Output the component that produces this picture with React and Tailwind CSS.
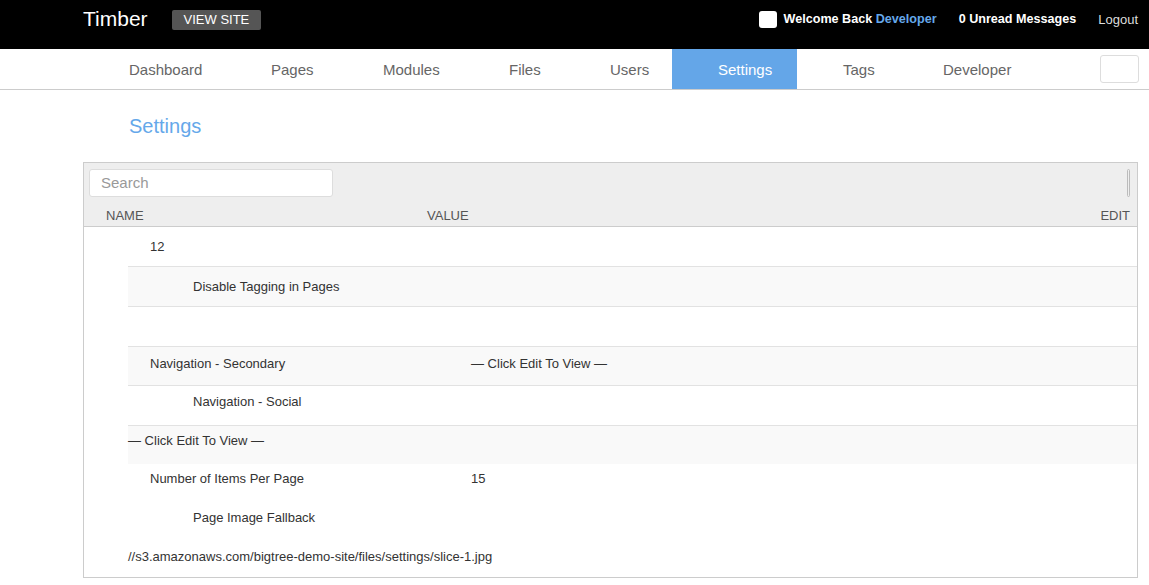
import React from "react";

const navItems = [
  ["Dashboard", "w-[142px]"],
  ["Pages", "w-[112px]"],
  ["Modules", "w-[126px]"],
  ["Files", "w-[101px]"],
  ["Users", "w-[108px]"],
  ["Settings", "w-[125px]"],
  ["Tags", "w-[100px]"],
  ["Developer", "w-[138px]"],
];

const Row = ({ shade, border = true, h, pt, children }) => (
  <div
    className={`flex items-start leading-[15px] ${h} ${pt} ${border ? "border-t border-[#e2e2e2]" : ""} ${
      shade ? "bg-[#f9f9f9]" : "bg-white"
    }`}
  >
    {children}
  </div>
);

const App = () => {
  return (
    <div className="min-h-screen bg-white text-[13px] text-[#333]" style={{ fontFamily: '"Liberation Sans", Arial, sans-serif' }}>
      {/* top bar */}
      <header className="h-[49px] bg-black flex items-center pl-[83px] pr-[11px]">
        <span className="text-white text-[21px] leading-none -mt-[12px]">Timber</span>
        <span className="ml-[24px] -mt-[10px] bg-[#555] text-white text-[13px] px-[12px] h-[20px] flex items-center rounded-[2px]">
          VIEW SITE
        </span>
        <div className="ml-auto flex items-center -mt-[11px]">
          <span className="w-[18px] h-[17px] bg-white rounded-[3px] mr-[7px]" />
          <span className="text-white font-bold text-[12.6px]">
            Welcome Back <span className="text-[#65a8ea]">Developer</span>
          </span>
          <span className="ml-[22px] text-white font-bold text-[12.6px]">0 Unread Messages</span>
          <span className="ml-[22px] text-[#ddd] text-[13px] mt-[2px]">Logout</span>
        </div>
      </header>

      {/* nav */}
      <nav className="h-[41px] border-b border-[#ccc] flex pl-[83px] pr-[10px]">
        {navItems.map(([item, w]) => (
          <span
            key={item}
            className={`${w} pl-[46px] pt-[3px] flex items-center text-[15px] ${
              item === "Settings" ? "bg-[#64a6e8] text-white" : "text-[#666]"
            }`}
          >
            {item}
          </span>
        ))}
        <span className="ml-auto mt-[6px] w-[39px] h-[28px] border border-[#ddd] rounded-[3px]" />
      </nav>

      <h1 className="pl-[129px] pt-[24px] text-[20px] text-[#65a8ea] leading-[24px]">Settings</h1>

      {/* panel */}
      <div className="ml-[83px] mr-[11px] mt-[24px] border border-[#ccc] h-[416px]">
        <div className="bg-[#eee] border-b border-[#ccc] h-[64px]">
          <div className="flex items-start pt-[6px] pl-[5px] pr-[7px]">
            <div className="w-[244px] h-[28px] bg-white border border-[#ddd] rounded-[3px] flex items-center pl-[11px] text-[15px] text-[#999]">
              Search
            </div>
            <span className="ml-auto w-[3px] h-[28px] border border-[#bbb] rounded-[2px]" />
          </div>
          <div className="flex items-center pl-[22px] pr-[7px] mt-[9px] text-[13px] text-[#555]">
            <span className="w-[321px]">NAME</span>
            <span>VALUE</span>
            <span className="ml-auto">EDIT</span>
          </div>
        </div>

        <div className="ml-[44px]">
          <Row border={false} h="h-[39px]" pt="pt-[12px]">
            <span className="pl-[22px]">12</span>
          </Row>
          <Row shade h="h-[40px]" pt="pt-[12px]">
            <span className="pl-[65px]">Disable Tagging in Pages</span>
          </Row>
          <Row h="h-[40px]" pt="pt-[12px]" />
          <Row shade h="h-[39px]" pt="pt-[9px]">
            <span className="pl-[22px] w-[343px]">Navigation - Secondary</span>
            <span>— Click Edit To View —</span>
          </Row>
          <Row h="h-[40px]" pt="pt-[8px]">
            <span className="pl-[65px]">Navigation - Social</span>
          </Row>
          <Row shade h="h-[39px]" pt="pt-[7px]">
            <span>— Click Edit To View —</span>
          </Row>
          <Row border={false} h="h-[39px]" pt="pt-[7px]">
            <span className="pl-[22px] w-[343px]">Number of Items Per Page</span>
            <span>15</span>
          </Row>
          <Row border={false} h="h-[38px]" pt="pt-[7px]">
            <span className="pl-[65px]">Page Image Fallback</span>
          </Row>
          <Row border={false} h="h-[30px]" pt="pt-[8px]">
            <span>//s3.amazonaws.com/bigtree-demo-site/files/settings/slice-1.jpg</span>
          </Row>
        </div>
      </div>
    </div>
  );
};

export default App;
